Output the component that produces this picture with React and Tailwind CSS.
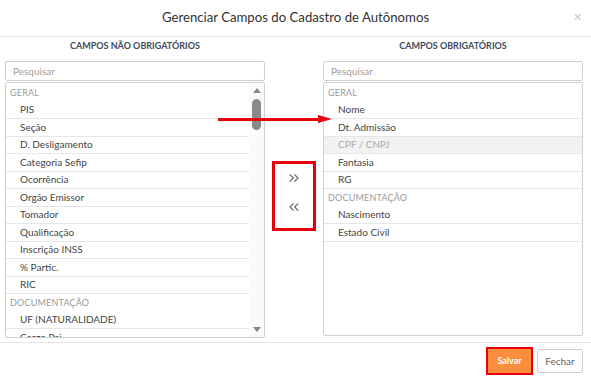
import { ChevronsRight, ChevronsLeft } from 'lucide-react';

const left = [
  { h: 'GERAL' },
  'PIS', 'Seção', 'D. Desligamento', 'Categoria Sefip', 'Ocorrência', 'Orgão Emissor',
  'Tomador', 'Qualificação', 'Inscrição INSS', '% Partic.', 'RIC',
  { h: 'DOCUMENTAÇÃO' },
  'UF (NATURALIDADE)', 'Cargo Pai',
];

const right = [
  { h: 'GERAL' },
  'Nome', 'Dt. Admissão', { t: 'CPF / CNPJ', off: true }, 'Fantasia', 'RG',
  { h: 'DOCUMENTAÇÃO' },
  'Nascimento', 'Estado Civil',
];

function Row({ item }) {
  if (item.h) {
    return (
      <div className="h-[17.5px] flex items-center pl-[4px] text-[9px] text-[#9a9a9a] tracking-[0.2px]">
        {item.h}
      </div>
    );
  }
  if (item.off) {
    return (
      <div className="h-[17.5px] flex items-center pl-[14px] text-[10px] text-[#aaa] bg-[#f2f2f2] border-b border-[#e6e6e6]">
        {item.t}
      </div>
    );
  }
  return (
    <div className="h-[17.5px] flex items-center pl-[14px] text-[10px] text-[#444] border-b border-[#e6e6e6]">
      {item}
    </div>
  );
}

function Column({ title, items, scroll, listH }) {
  return (
    <div className="w-[260px] flex flex-col">
      <div className="h-[16px] flex items-end justify-center text-[9px] font-bold text-[#3d4b5c] pb-[1px]">
        {title}
      </div>
      <div className="mt-[8px] h-[20px] border border-[#cfcfcf] rounded-[2px] flex items-center pl-[7px] text-[10px] text-[#a0a0a0]">
        Pesquisar
      </div>
      <div className={`mt-px ${listH} border border-[#cfcfcf] rounded-[2px] flex overflow-hidden`}>
        <div className="flex-1 overflow-hidden pt-px">
          {items.map((it, i) => <Row key={i} item={it} />)}
        </div>
        {scroll && (
          <div className="w-[15px] bg-[#fafafa] flex flex-col items-center justify-between py-[5px]">
            <div className="flex flex-col items-center gap-[6px]">
              <div className="w-0 h-0 border-l-[4.5px] border-r-[4.5px] border-b-[5px] border-l-transparent border-r-transparent border-b-[#888]" />
              <div className="w-[9px] h-[31px] rounded-full bg-[#8a8a8a]" />
            </div>
            <div className="w-0 h-0 border-l-[4.5px] border-r-[4.5px] border-t-[5px] border-l-transparent border-r-transparent border-t-[#888]" />
          </div>
        )}
      </div>
    </div>
  );
}

export default function App() {
  return (
    <div className="relative w-[591px] h-[379px] bg-white overflow-hidden" style={{ fontFamily: 'Lato, "Noto Sans", sans-serif' }}>
      <div className="h-[37px] border-b border-[#e5e5e5] flex items-center justify-center relative">
        <span className="text-[13.2px] text-[#333]">Gerenciar Campos do Cadastro de Autônomos</span>
        <span className="absolute right-[9px] top-[9px] text-[11px] text-[#c8c8c8]">✕</span>
      </div>

      <div className="flex px-[5px] h-[305px]">
        <Column title="CAMPOS NÃO OBRIGATÓRIOS" items={left} scroll listH="h-[256px]" />
        <div className="w-[58px] flex justify-center pt-[124px]">
          <div className="w-[44px] h-[70px] border-[3px] border-[#e8000b] flex flex-col items-center pt-[6px] gap-[13px] text-[#666]">
            <ChevronsRight size={16} strokeWidth={1.7} />
            <ChevronsLeft size={16} strokeWidth={1.7} />
          </div>
        </div>
        <Column title="CAMPOS OBRIGATÓRIOS" items={right} listH="h-[254px]" />
      </div>

      <div className="border-t border-[#e5e5e5] h-[37px] flex items-center justify-end gap-[4px] pr-[8px]">
        <button className="w-[47px] h-[28px] bg-[#fb8d3d] border-2 border-[#e8000b] text-white text-[9px] font-bold">
          Salvar
        </button>
        <button className="w-[46px] h-[24px] bg-white border border-[#cfcfcf] rounded-[2px] text-[#666] text-[10px]">
          Fechar
        </button>
      </div>

      <div className="absolute left-[218px] top-[118px] w-[102px] h-[3px] bg-[#e8000b]" />
      <div className="absolute left-[318px] top-[115px] w-0 h-0 border-t-[4.5px] border-b-[4.5px] border-l-[14px] border-t-transparent border-b-transparent border-l-[#e8000b]" />
    </div>
  );
}
